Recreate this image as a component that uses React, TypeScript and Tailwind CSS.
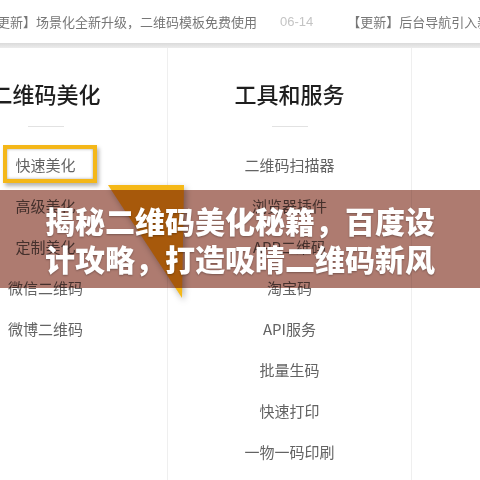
export default function App() {
  const left = ['快速美化', '高级美化', '定制美化', '微信二维码', '微博二维码'];
  const tools = ['二维码扫描器', '浏览器插件', 'APP二维码', '淘宝码', 'API服务', '批量生码', '快速打印', '一物一码印刷'];

  return (
    <div className="relative w-[480px] h-[480px] overflow-hidden bg-white font-['Microsoft_YaHei','Noto_Sans_CJK_SC',sans-serif]">
      {/* news ticker */}
      <div className="h-[43px] flex items-center whitespace-nowrap text-[13px] text-[#777] ml-[-16px]">
        <span>【更新】场景化全新升级，二维码模板免费使用</span>
        <span className="ml-[23px] text-[#c4c4c4] font-['Liberation_Sans',sans-serif]">06-14</span>
        <span className="ml-[34px]">【更新】后台导航引入新功能</span>
      </div>
      <div className="h-[5px] bg-gradient-to-b from-[#dadada] to-[#ececec]" />

      {/* columns */}
      <div className="flex ml-[-76px] h-[432px]">
        <div className="w-[244px] shrink-0 border-r border-[#efefef]">
          <h2 className="pt-[30px] text-[22px] leading-[30px] text-center font-medium text-[#1e1e1e]">二维码美化</h2>
          <div className="mt-[18px] mx-auto w-[36px] h-px bg-[#e2e2e2]" />
          <ul className="mt-[17px]">
            {left.map((t) => (
              <li key={t} className="h-[41px] leading-[41px] text-center text-[15px] text-[#636363]">{t}</li>
            ))}
          </ul>
        </div>
        <div className="w-[244px] shrink-0 border-r border-[#efefef]">
          <h2 className="pt-[30px] text-[22px] leading-[30px] text-center font-medium text-[#1e1e1e]">工具和服务</h2>
          <div className="mt-[18px] mx-auto w-[36px] h-px bg-[#e2e2e2]" />
          <ul className="mt-[17px]">
            {tools.map((t) => (
              <li key={t} className="h-[41px] leading-[41px] text-center text-[15px] text-[#636363]">{t}</li>
            ))}
          </ul>
        </div>
        <div className="flex-1" />
      </div>

      {/* highlight frame */}
      <div className="absolute left-[3px] top-[145px] w-[94px] h-[38px] border-[4px] border-[#f4b719] shadow-[inset_0_0_3px_rgba(0,0,0,0.35),2px_3px_4px_rgba(0,0,0,0.3)]" />

      {/* pointer */}
      <svg className="absolute left-[100px] top-[180px] drop-shadow-[2px_3px_3px_rgba(0,0,0,0.3)]" width="100" height="125" viewBox="0 0 100 125">
        <polygon points="8,5 84,5 82,118" fill="#f5b817" />
      </svg>

      {/* title band */}
      <div className="absolute left-0 top-[190px] w-full h-[98px] bg-[#ae7b70] mix-blend-multiply" />
      <div className="absolute left-0 top-[190px] w-full h-[98px] flex items-center justify-center">
        <p className="w-[392px] text-center text-[30px] leading-[38px] font-black text-white [text-shadow:0_1px_2px_rgba(0,0,0,0.3)]">
          揭秘二维码美化秘籍，百度设<br />计攻略，打造吸睛二维码新风
        </p>
      </div>
    </div>
  );
}
